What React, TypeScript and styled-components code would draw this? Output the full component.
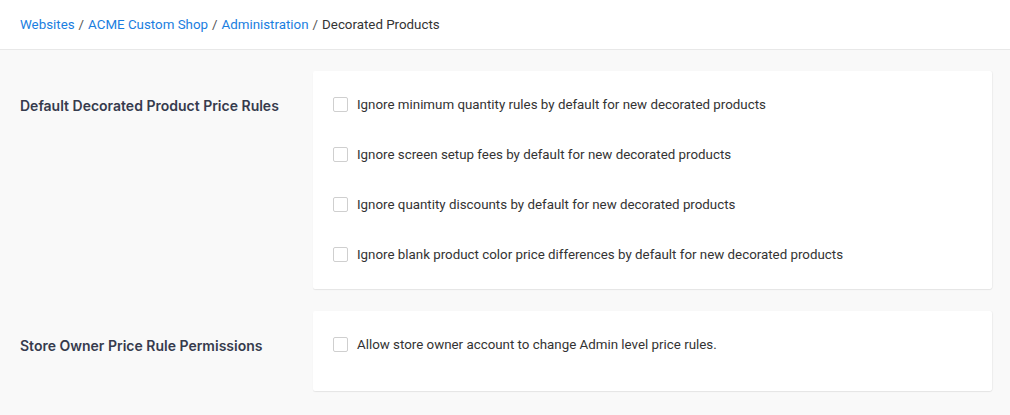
import React from 'react';
import styled, { createGlobalStyle } from 'styled-components';

const GlobalStyle = createGlobalStyle`
    html, body {
        margin: 0;
        padding: 0;
        background: #f9f9f9;
        font-family: Roboto, "Liberation Sans", sans-serif;
    }
    * {
        box-sizing: border-box;
    }
`;

const Header = styled.div`
    height: 50px;
    background: #fff;
    border-bottom: 1px solid #e8e8e8;
    display: flex;
    align-items: center;
    padding: 0 20px 1px;
    font-size: 13.33px;
    color: #333;
`;

const Crumb = styled.a`
    color: #1a7ee0;
    text-decoration: none;
    cursor: pointer;
`;

const Sep = styled.span`
    color: #555;
    margin: 0 4px;
`;

const Content = styled.div`
    padding: 21px 18px 20px 20px;
    display: flex;
    flex-direction: column;
    gap: 22px;
`;

const Section = styled.div`
    display: grid;
    grid-template-columns: 293px 1fr;
    align-items: start;
`;

const SectionLabel = styled.div`
    font-family: Inter, "Noto Sans", sans-serif;
    font-weight: 600;
    font-size: 14px;
    color: #363b4d;
    padding-top: 26px;
`;

const Card = styled.div<{ bottom?: number }>`
    background: #fff;
    border-radius: 2px;
    box-shadow: 0 1px 1px rgba(0, 0, 0, 0.08), 1px 0 1px rgba(0, 0, 0, 0.04);
    padding: 8px 20px ${props => props.bottom ?? 10}px;
    display: flex;
    flex-direction: column;
`;

const Row = styled.label`
    display: flex;
    align-items: center;
    height: 50px;
    gap: 9px;
    font-size: 13.33px;
    color: #333;
    cursor: pointer;
`;

const Box = styled.span`
    width: 15px;
    height: 15px;
    border: 1px solid #cfcfcf;
    border-radius: 2px;
    background: #fff;
    flex-shrink: 0;
`;

const priceRules = [
    'Ignore minimum quantity rules by default for new decorated products',
    'Ignore screen setup fees by default for new decorated products',
    'Ignore quantity discounts by default for new decorated products',
    'Ignore blank product color price differences by default for new decorated products',
];

const App = () => {
    return (
        <>
            <GlobalStyle />
            <Header>
                <Crumb>Websites</Crumb>
                <Sep>/</Sep>
                <Crumb>ACME Custom Shop</Crumb>
                <Sep>/</Sep>
                <Crumb>Administration</Crumb>
                <Sep>/</Sep>
                <span>Decorated Products</span>
            </Header>
            <Content>
                <Section>
                    <SectionLabel>Default Decorated Product Price Rules</SectionLabel>
                    <Card>
                        {priceRules.map((text) => (
                            <Row key={text}>
                                <Box />
                                {text}
                            </Row>
                        ))}
                    </Card>
                </Section>
                <Section>
                    <SectionLabel>Store Owner Price Rule Permissions</SectionLabel>
                    <Card bottom={22}>
                        <Row>
                            <Box />
                            Allow store owner account to change Admin level price rules.
                        </Row>
                    </Card>
                </Section>
            </Content>
        </>
    );
};

export default App;
